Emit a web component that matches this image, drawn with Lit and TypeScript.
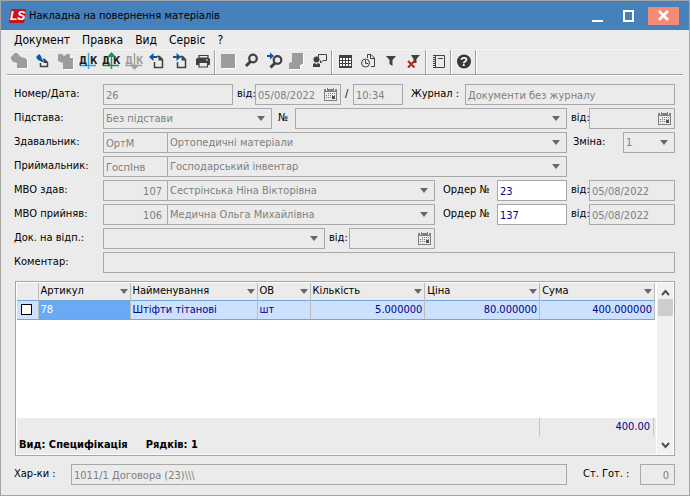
import { LitElement, html, svg, css, nothing } from "lit";
import { customElement } from "lit/decorators.js";
import { classMap } from "lit/directives/class-map.js";

const calendar = svg`
  <rect x="0" y="1" width="13" height="12" fill="#808080"/>
  <path d="M1 4H12V12H1Z" fill="#ebebeb"/>
  <path d="M3 0V3M10 0V3" stroke="#ebebeb" stroke-width="2"/>
  <path d="M3.500 0V3M9.500 0V3" stroke="#808080"/>
  <path d="M4 5.500H11M2 7.500H11M2 9.500H8" stroke="#808080" stroke-dasharray="1 1"/>
  <rect x="8" y="8" width="3" height="3" fill="#505050"/>`;

const dk = (line: string, text: string, arrow: unknown) => svg`
  <path d="M12.500 3V19M4 15.500H20" stroke=${line} stroke-width="1.400" fill="none"/>
  <text x="3" y="14" class="dk" fill=${text}>Д</text>
  <text x="14" y="14" class="dk" fill=${text}>К</text>${arrow}`;

const page = svg`<path d="M12 6.500H14.500L17.500 9.500V17.500H9.500V12" fill="none" stroke="#404040" stroke-width="1.500"/><path d="M13.500 6V10.500H18Z" fill="#404040"/>`;

const icons: Record<string, unknown> = {
  add: svg`<path d="M5 8L7 6 9 4H11L13 6 15 8 19 9 21 11V19H11V14L7 13 5 10Z" fill="#fff"/><path d="M4 7L6 5 8 3H10L12 5 14 7 18 8 20 10V18H10V13L6 12 4 9Z" fill="#9c9c9c"/>`,
  edit: svg`<path d="M13 9.500H14.500L17.500 12.500V16.500H10.500V13" fill="none" stroke="#404040" stroke-width="1.500"/><path d="M14 9V13H18Z" fill="#404040"/><path d="M6 7L9 4 11 6 12 9 15 13 10 11 8 10Z" fill="#0a56a4"/>`,
  remove: svg`<path d="M6 5H11L13 8 16 6H19V9H21V20H11V12H6Z" fill="#fff"/><path d="M5 4H9L11 6 14 4H17V8H20V19H10V13L5 11Z" fill="#9c9c9c"/>`,
  dk: dk("#2ba5de", "#202020", nothing),
  dkUp: dk("#16965a", "#202020", svg`<path d="M12.500 2L17 7H8Z" fill="#16965a"/>`),
  dkDown: dk("#a0a0a0", "#a0a0a0", svg`<path d="M12.500 20L17 15H8Z" fill="#a0a0a0"/>`),
  back: svg`${page}<path d="M4 7L8.500 3V6H12V8H8.500V11Z" fill="#0a56a4"/>`,
  forward: svg`${page}<path d="M13 7L8.500 3V6H5V8H8.500V11Z" fill="#0a56a4"/>`,
  print: svg`<path d="M8 5.500H17V8H8Z" fill="#ebebeb" stroke="#404040" stroke-width="1.200"/><path d="M6 8H18L19 9V15H5V9Z" fill="#404040"/><path d="M8 12.500H16.500V17H8Z" fill="#ebebeb" stroke="#404040" stroke-width="1.200"/><path d="M15 10H17" stroke="#ebebeb"/>`,
  stop: svg`<path d="M6 5H20V19H6Z" fill="#fff"/><path d="M5 4H19V18H5Z" fill="#9c9c9c"/>`,
  find: svg`<circle cx="14" cy="8.500" r="3.800" fill="none" stroke="#404040" stroke-width="2.200"/><path d="M11.500 11.500L7 16" stroke="#404040" stroke-width="3"/>`,
  findNext: svg`<circle cx="15.500" cy="10" r="3.800" fill="none" stroke="#404040" stroke-width="2.200"/><path d="M13 13L8.500 17.500" stroke="#404040" stroke-width="3"/><path d="M5 5H8V2.500L12 6 8 9.500V7H5Z" fill="#0a56a4"/>`,
  copy: svg`<path d="M8 4H19V15L16 16V20H5V14L8 13Z" fill="#fff"/><path d="M7 3H18V14L15 15V19H4V13L7 12Z" fill="#9c9c9c"/>`,
  user: svg`<circle cx="8.500" cy="9.500" r="3" fill="#404040"/><path d="M5 17V14L7 13 8.500 14.500 10 13 12 14V17Z" fill="#404040"/><path d="M10.500 7V4.500H18.500V10.500H15L12.500 13V10.500" fill="none" stroke="#404040"/>`,
  grid: svg`<path d="M6 5H19V18H6Z" fill="#404040"/><path d="M7 8H9V10H7ZM10 8H12V10H10ZM13 8H15V10H13ZM16 8H18V10H16ZM7 11H9V13H7ZM10 11H12V13H10ZM13 11H15V13H13ZM16 11H18V13H16ZM7 14H9V16H7ZM10 14H12V16H10ZM13 14H15V16H13ZM16 14H18V16H16Z" fill="#fff"/>`,
  history: svg`<path d="M11.500 8V4.500H15L18.500 8V16.500H15" fill="none" stroke="#404040"/><path d="M14.500 4V8.500H19" fill="none" stroke="#404040"/><circle cx="9.500" cy="13" r="4" fill="none" stroke="#404040"/><path d="M9.500 10V13.500H12" fill="none" stroke="#404040"/>`,
  filter: svg`<path d="M7 6H17L13.500 10V16L10.500 14V10Z" fill="#404040"/>`,
  unfilter: svg`<path d="M9 5H18L14.500 9V13H12L11.500 9Z" fill="#404040"/><path d="M6 11L12.500 17.500M12.500 11L6 17.500" stroke="#b3261e" stroke-width="2"/>`,
  notes: svg`<path d="M7.500 5.500H17.500V17.500H7.500" fill="none" stroke="#404040"/><path d="M8.500 5V18" stroke="#404040"/><path d="M7 5V18" stroke="#404040" stroke-width="2" stroke-dasharray="1 1"/><path d="M11 8.500H16" stroke="#404040"/>`,
  help: svg`<circle cx="12" cy="11.500" r="7" fill="#363636"/><text x="12" y="16" class="q" text-anchor="middle" fill="#fff">?</text>`,
};

const toolbar: [string, string][][] = [
  [["add", "Додати"], ["edit", "Змінити"], ["remove", "Вилучити"], ["dk", "Проводки"], ["dkUp", "Провести"], ["dkDown", "Відкликати"], ["back", "Попередній"], ["forward", "Наступний"], ["print", "Друк"]],
  [["stop", "Стоп"], ["find", "Пошук"], ["findNext", "Шукати далі"], ["copy", "Копіювати"], ["user", "Користувач"]],
  [["grid", "Таблиця"], ["history", "Історія"], ["filter", "Фільтр"], ["unfilter", "Зняти фільтр"]],
  [["notes", "Примітки"]],
  [["help", "Довідка"]],
];

const columns = [
  { title: "Артикул", cls: "c-art" },
  { title: "Найменування", cls: "c-name" },
  { title: "ОВ", cls: "c-unit" },
  { title: "Кількість", cls: "c-num" },
  { title: "Ціна", cls: "c-num" },
  { title: "Сума", cls: "c-num" },
];

@customElement("app-root")
export class AppRoot extends LitElement {
  static styles = css`
    :host {
      display: block;
      font: 11px/14px "DejaVu Sans Condensed", "DejaVu Sans", sans-serif;
      color: #000;
    }
    * { box-sizing: border-box; }
    svg { display: block; }
    button { border: 0; padding: 0; background: none; font: inherit; color: inherit; }
    .window {
      display: flex;
      flex-direction: column;
      min-height: 100vh;
      background: #ebebeb;
      border: 1px solid #a5a5a5;
    }
    .title {
      display: flex;
      align-items: center;
      height: 29px;
      padding: 0 10px 0 8px;
      background: #4681bc;
    }
    .title h1 { flex: 1; margin: 0 0 0 3px; font: inherit; }
    .win { width: 31px; height: 18px; display: grid; place-items: center; }
    .close { margin-left: 4px; background: #f58a76; }
    .ls { font: italic bold 12px "Liberation Sans", sans-serif; }
    .menu { display: flex; gap: 12px; height: 19px; padding: 0 13px; font-size: 12px; line-height: 18px; }
    .tools {
      display: flex;
      height: 27px;
      margin: 0 6px;
      border-top: 1px solid #f4f4f4;
      border-bottom: 1px solid #fff;
      box-shadow: inset 0 -1px #a0a0a0;
    }
    .tools button { width: 23px; height: 24px; }
    .sep { width: 2px; height: 24px; background: #fff; border-left: 1px solid #a0a0a0; }
    .dk { font: bold 10px "DejaVu Sans Condensed", sans-serif; }
    .q { font: bold 13px "Liberation Sans", sans-serif; }

    .form { display: flex; flex-direction: column; gap: 3px; padding: 8px 14px 0 13px; }
    .row { display: flex; align-items: stretch; height: 21px; }
    .row label { white-space: pre; line-height: 20px; flex: none; padding-left: 4px; }
    .row .lead { width: 89px; padding-left: 0; }
    .date-label { width: 22px; }
    .wide { width: 24px; }
    .no { width: 23px; }
    .row label.no { padding-left: 6px; }
    .slash { width: 12px; }
    .journal { width: 62px; }
    .row label.journal { padding-left: 8px; }
    .shift { width: 56px; }
    .row label.shift { padding-left: 6px; }
    .order { width: 62px; }
    .row label.order { padding-left: 8px; }
    .field {
      display: flex;
      align-items: center;
      border: 1px solid #a8a8a8;
      background: #ebebeb;
      min-width: 0;
      flex: none;
    }
    .field + .field { margin-left: -1px; }
    .field.edit { background: #fff; }
    .field.grow { flex: 1; }
    .field input, .field select {
      flex: 1;
      width: 100%;
      min-width: 0;
      height: 19px;
      border: 0;
      padding: 1px 0 0 2px;
      margin: 0;
      background: none;
      font: inherit;
      color: #808080;
      opacity: 1;
      outline: none;
      appearance: none;
      -webkit-text-fill-color: currentColor;
    }
    .field.edit input { color: #00008b; }
    .field.num input { text-align: right; padding-right: 5px; }
    .field svg { flex: none; margin-right: 3px; }
    .field svg.arrow { margin-right: 6px; }
    .w35 { width: 35px; }
    .w50 { width: 50px; }
    .w52 { width: 52px; }
    .w65 { width: 65px; }
    .w70 { width: 70px; }
    .w86 { width: 86px; }
    .w130 { width: 130px; }
    .w169 { width: 169px; }
    .end108 { margin-right: 108px; }
    .end240 { margin-right: 240px; }

    .grid {
      flex: 1;
      display: flex;
      margin: 8px 14px 0;
      padding: 1px;
      border: 1px solid #a5a5a5;
      background: #fff;
    }
    .data { flex: 1; min-width: 0; display: flex; flex-direction: column; }
    table { width: calc(100% - 1px); table-layout: fixed; border-collapse: collapse; }
    .c-box { width: 21px; }
    .c-art { width: 92px; }
    .c-name { width: 127px; }
    .c-unit { width: 53px; }
    th { height: 17px; padding: 0 2px; background: #ebebeb; border-right: 1px solid #bcbcbc; font-weight: normal; text-align: left; }
    .head { display: flex; align-items: center; justify-content: space-between; height: 16px; }
    td {
      height: 19px;
      padding: 0 2px;
      background: #cce1fe;
      border-right: 1px solid #bcbcbc;
      border-top: 1px solid #74a6dc;
      border-bottom: 1px solid #74a6dc;
      color: #00008b;
    }
    td.sel { background: #69aaf5; color: #fff; }
    td.r { text-align: right; padding-right: 2px; }
    td input {
      display: block;
      appearance: none;
      width: 11px;
      height: 11px;
      margin: 0 0 0 2px;
      border: 1px solid #000;
      background: #fff;
    }
    .space { flex: 1; }
    .total { display: flex; height: 18px; background: #ebebeb; justify-content: flex-end; padding-right: 2px; }
    .total output {
      width: 115px;
      padding: 0 3px;
      border: 1px solid #c4c4c4;
      border-width: 0 1px;
      text-align: right;
      line-height: 18px;
      color: #00008b;
    }
    .status { display: flex; gap: 18px; height: 18px; padding-left: 2px; background: #ebebeb; font-weight: bold; line-height: 18px; }
    .scroll { width: 17px; display: flex; flex-direction: column; align-items: center; padding: 6px 0 5px 1px; background: linear-gradient(90deg, #fff 1px, #f0f0f0 1px); }
    .thumb { width: 15px; height: 17px; margin-top: 3px; background: #cdcdcd; }
    .bottom { padding: 8px 14px 10px 13px; }
    .bottom .row .lead { width: 57px; }
    .ready { width: 73px; }
    .row label.ready { padding-left: 16px; }
  `;

  private text(id: string, value: string, cls: string) {
    return html`<div class="field ${cls}"><input id=${id} .value=${value} ?disabled=${!cls.includes("edit")}></div>`;
  }
  private date(id: string, value = "") {
    return html`<div class="field w86"><input id=${id} .value=${value} disabled><svg width="13" height="13">${calendar}</svg></div>`;
  }
  private arrow(cls = "arrow") {
    return html`<svg class=${cls} width="8" height="5"><path d="M0 0H8L4 5Z" fill="#686868"/></svg>`;
  }
  private combo(id: string, value: string, cls: string, label = nothing as unknown) {
    return html`<div class="field ${cls}"><select id=${id} aria-label=${label} disabled><option>${value}</option></select>${this.arrow()}</div>`;
  }

  render() {
    return html`
      <main class="window">
        <header class="title">
          <svg width="17" height="14">
            <path d="M2 0H17L15 14H0Z" fill="#c9141e"/>
            <text class="ls" x="1" y="11" fill="#fff">LS</text>
          </svg>
          <h1>Накладна на повернення матеріалів</h1>
          <button class="win" aria-label="Згорнути"><svg width="11" height="12"><path d="M0 10H11V12H0Z" fill="#fff"/></svg></button>
          <button class="win" aria-label="Розгорнути"><svg width="11" height="12"><path d="M1 1H10V11H1Z" fill="none" stroke="#fff" stroke-width="2"/></svg></button>
          <button class="win close" aria-label="Закрити"><svg width="11" height="11"><path d="M1 1L10 10M10 1L1 10" stroke="#fff" stroke-width="2.500"/></svg></button>
        </header>
        <nav class="menu">
          ${["Документ", "Правка", "Вид", "Сервіс", "?"].map((m) => html`<button>${m}</button>`)}
        </nav>
        <div class="tools">
          ${toolbar.map((group) => html`
            ${group.map(([icon, name]) => html`<button aria-label=${name}><svg width="23" height="24">${icons[icon]}</svg></button>`)}
            <span class="sep"></span>`)}
        </div>

        <form class="form">
          <div class="row">
            <label class="lead" for="num">Номер/Дата:</label>${this.text("num", "26", "w130")}
            <label class="date-label" for="date">від:</label>${this.date("date", "05/08/2022")}
            <label class="slash" for="time">/</label>${this.text("time", "10:34", "w50")}
            <label class="journal" for="journal">Журнал :</label>${this.text("journal", "Документи без журналу", "grow")}
          </div>
          <div class="row">
            <label class="lead" for="basis">Підстава:</label>${this.combo("basis", "Без підстави", "w169")}
            <label class="no" for="bno">№</label>${this.combo("bno", "", "grow")}
            <label class="date-label" for="bdate">від:</label>${this.date("bdate")}
          </div>
          <div class="row">
            <label class="lead" for="giver">Здавальник:</label>${this.text("giver", "ОртМ", "w65")}
            ${this.combo("giverName", "Ортопедичні матеріали", "grow", "Назва здавальника")}
            <label class="shift" for="shift">Зміна:</label>${this.combo("shift", "1", "w52")}
          </div>
          <div class="row">
            <label class="lead" for="taker">Приймальник:</label>${this.text("taker", "ГоспІнв", "w65")}
            ${this.combo("takerName", "Господарський інвентар", "grow end108", "Назва приймальника")}
          </div>
          ${[
            ["МВО здав:", "107", "Сестрінська Ніна Вікторівна", "23"],
            ["МВО прийняв:", "106", "Медична Ольга Михайлівна", "137"],
          ].map(([label, code, name, order]) => html`
            <div class="row">
              <label class="lead" for="m${code}">${label}</label>${this.text("m" + code, code, "w65 num")}
              ${this.combo("n" + code, name, "grow", label)}
              <label class="order" for="o${code}">Ордер №</label>${this.text("o" + code, order, "w70 edit")}
              <label class="date-label" for="d${code}">від:</label>${this.text("d" + code, "05/08/2022", "w86")}
            </div>`)}
          <div class="row">
            <label class="lead" for="doc">Док. на відп.:</label>${this.combo("doc", "", "grow")}
            <label class="wide" for="docDate">від:</label>${this.date("docDate")}<span class="end240"></span>
          </div>
          <div class="row">
            <label class="lead" for="note">Коментар:</label>${this.text("note", "", "grow")}
          </div>
        </form>

        <section class="grid">
          <div class="data">
            <table>
              <thead>
                <tr>
                  <th class="c-box"></th>
                  ${columns.map((c) => html`<th class=${c.cls}><div class="head">${c.title}${this.arrow("sort")}</div></th>`)}
                </tr>
              </thead>
              <tbody>
                <tr>
                  <td><input type="checkbox" aria-label="Вибрати рядок"></td>
                  ${["78", "Штіфти тітанові", "шт", "5.000000", "80.000000", "400.000000"].map(
                    (v, i) => html`<td class=${classMap({ sel: i === 0, r: i > 2 })}>${v}</td>`
                  )}
                </tr>
              </tbody>
            </table>
            <div class="space"></div>
            <div class="total"><output>400.00</output></div>
            <div class="status"><span>Вид: Специфікація</span><span>Рядків: 1</span></div>
          </div>
          <div class="scroll">
            <svg width="9" height="7"><path d="M1 6L4.500 2L8 6" fill="none" stroke="#505050" stroke-width="2"/></svg>
            <div class="thumb"></div>
            <div class="space"></div>
            <svg width="9" height="7"><path d="M1 1L4.500 5L8 1" fill="none" stroke="#505050" stroke-width="2"/></svg>
          </div>
        </section>

        <footer class="bottom">
          <div class="row">
            <label class="lead" for="props">Хар-ки :</label>${this.text("props", "1011/1 Договора (23)\\\\\\", "grow")}
            <label class="ready" for="ready">Ст. Гот. :</label>${this.text("ready", "0", "w35 num")}
          </div>
        </footer>
      </main>`;
  }
}
